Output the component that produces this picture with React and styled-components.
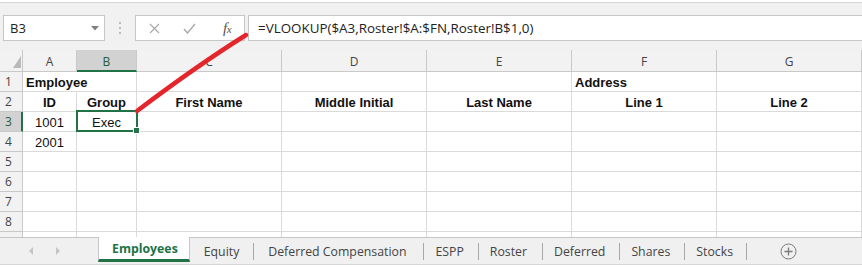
import React from 'react';
import styled, { createGlobalStyle } from 'styled-components';

const GREEN = '#217346';
const GRID = '#dadada';
const HEAD_LINE = '#c9c9c9';

const Global = createGlobalStyle`
  html, body { margin: 0; padding: 0; background: #fff; }
  * { box-sizing: border-box; }
`;

const Page = styled.div`
  position: relative;
  width: 862px;
  height: 267px;
  overflow: hidden;
  background: #fff;
  padding-top: 2px;
  display: flex;
  flex-direction: column;
`;

/* ---------- formula bar ---------- */
const FormulaBar = styled.div`
  height: 48px;
  border-top: 1px solid #d4d4d4;
  background: #f1f1f1;
  display: flex;
  align-items: flex-start;
  padding: 12px 0 0 3px;
`;

const Box = styled.div`
  height: 26px;
  background: #fff;
  border: 1px solid #c6c6c6;
  display: flex;
  align-items: center;
`;

const NameBox = styled(Box)`
  width: 102px;
  padding: 0 5px 0 6px;
  justify-content: space-between;
  font: 13px "Open Sans", "Noto Sans", sans-serif;
  color: #222;
`;

const Grip = styled.div`
  width: 30px;
  height: 26px;
  display: flex;
  flex-direction: column;
  align-items: center;
  justify-content: center;
  gap: 3px;
  & > i { width: 2px; height: 2px; background: #bdbdbd; display: block; }
`;

const FxBox = styled(Box)`
  width: 110px;
  padding: 0 0 0 12px;
`;

const IconSlot = styled.div`
  width: ${p => p.$w}px;
  display: flex;
  align-items: center;
  justify-content: center;
`;

const FxText = styled.span`
  font: italic 15px "Liberation Serif", "DejaVu Serif", serif;
  color: #555;
  letter-spacing: -0.5px;
  & > small { font-size: 11px; }
`;

const FormulaInput = styled(Box)`
  flex: 1;
  margin-left: 3px;
  border-right: none;
  padding-left: 9px;
  font: 13.4px "Open Sans", "Noto Sans", sans-serif;
  color: #222;
`;

/* ---------- sheet ---------- */
const Sheet = styled.div`
  height: 187px;
  overflow: hidden;
  display: grid;
  grid-template-columns: 23px 54px 60px repeat(5, 145px);
  grid-template-rows: 22px;
  grid-auto-rows: 20px;
`;

const Corner = styled.div`
  background: #f2f2f2;
  border-right: 1px solid ${HEAD_LINE};
  border-bottom: 1px solid ${HEAD_LINE};
  display: flex;
  align-items: flex-end;
  justify-content: flex-end;
  padding: 0 1px 3px 0;
`;

const ColHead = styled.div`
  background: ${p => (p.$active ? '#d2d2d2' : '#f2f2f2')};
  border-right: 1px solid ${HEAD_LINE};
  border-bottom: ${p => (p.$active ? `2px solid ${GREEN}` : `1px solid ${HEAD_LINE}`)};
  display: flex;
  align-items: center;
  justify-content: center;
  padding-top: ${p => (p.$active ? '3px' : '2px')};
  font: 12px "Open Sans", "Noto Sans", sans-serif;
  color: ${p => (p.$active ? '#255c3c' : '#444')};
`;

const RowHead = styled.div`
  background: ${p => (p.$active ? '#d2d2d2' : '#f2f2f2')};
  border-right: ${p => (p.$active ? `2px solid ${GREEN}` : `1px solid ${HEAD_LINE}`)};
  border-bottom: 1px solid ${HEAD_LINE};
  display: flex;
  align-items: center;
  padding-left: 5px;
  font: 12px "Open Sans", "Noto Sans", sans-serif;
  color: ${p => (p.$active ? '#255c3c' : '#444')};
`;

const Cell = styled.div`
  position: relative;
  border-right: 1px solid ${p => (p.$noRight ? 'transparent' : GRID)};
  border-bottom: 1px solid ${GRID};
  display: flex;
  align-items: center;
  justify-content: ${p => (p.$left ? 'flex-start' : 'center')};
  padding: 1px 3px 0;
  white-space: nowrap;
  font: ${p => (p.$bold ? 700 : 400)} 13px "Liberation Sans", Arial, sans-serif;
  color: #111;
  ${p =>
    p.$selected &&
    `
    &::after {
      content: '';
      position: absolute;
      left: -1px; top: -2px; right: -2px; bottom: -1px;
      border: 2px solid ${GREEN};
      pointer-events: none;
    }
    &::before {
      content: '';
      position: absolute;
      right: -4px; bottom: -3px;
      width: 5px; height: 5px;
      background: ${GREEN};
      border: 1px solid #fff;
      z-index: 2;
    }
  `}
`;

/* ---------- tabs ---------- */
const TabBar = styled.div`
  height: 28px;
  background: #f0f0f0;
  border-top: 1px solid #c6c6c6;
  border-bottom: 1px solid #d6d6d6;
  display: flex;
  align-items: stretch;
  font: 12.3px "Open Sans", "Noto Sans", sans-serif;
  color: #444;
`;

const NavArea = styled.div`
  width: 98px;
  display: flex;
  align-items: center;
  padding-left: 29px;
  gap: 21px;
`;

const ActiveTab = styled.div`
  margin-top: -1px;
  height: 25px;
  background: #fff;
  border-left: 1px solid #c6c6c6;
  border-right: 1px solid #c6c6c6;
  border-bottom: 3px solid ${GREEN};
  display: flex;
  align-items: center;
  padding: 1px 11px 0 13px;
  font-weight: 700;
  color: ${GREEN};
`;

const Tab = styled.div`
  display: flex;
  align-items: center;
  padding: 0 ${p => p.$pr ?? 14}px 0 ${p => p.$pl ?? 11}px;
  position: relative;
  &::after {
    content: '';
    position: absolute;
    right: 0;
    top: 5px;
    height: 17px;
    border-right: 1px solid #a8a8a8;
  }
`;

const AddSlot = styled.div`
  display: flex;
  align-items: center;
  padding-left: 33px;
`;

const Annotation = styled.svg`
  position: absolute;
  left: 0;
  top: 0;
  pointer-events: none;
`;

const cols = ['A', 'B', 'C', 'D', 'E', 'F', 'G'];

const rows = [
  { n: 1, cells: { A: { t: 'Employee', bold: true, left: true, noRight: true }, F: { t: 'Address', bold: true, left: true } } },
  {
    n: 2,
    cells: {
      A: { t: 'ID', bold: true },
      B: { t: 'Group', bold: true },
      C: { t: 'First Name', bold: true },
      D: { t: 'Middle Initial', bold: true },
      E: { t: 'Last Name', bold: true },
      F: { t: 'Line 1', bold: true },
      G: { t: 'Line 2', bold: true },
    },
  },
  { n: 3, active: true, cells: { A: { t: '1001' }, B: { t: 'Exec', selected: true } } },
  { n: 4, cells: { A: { t: '2001' } } },
  { n: 5, cells: {} },
  { n: 6, cells: {} },
  { n: 7, cells: {} },
  { n: 8, cells: {} },
  { n: null, cells: {} },
];

const tabs = [
  { t: 'Equity', pl: 14, pr: 15 },
  { t: 'Deferred Compensation', pl: 14, pr: 18 },
  { t: 'ESPP', pl: 11, pr: 15 },
  { t: 'Roster', pl: 11, pr: 16 },
  { t: 'Deferred', pl: 11, pr: 15 },
  { t: 'Shares', pl: 11, pr: 15 },
  { t: 'Stocks', pl: 11, pr: 14 },
];

const Arrow = ({ dir }) => (
  <svg width="5" height="8" viewBox="0 0 5 8">
    <path d={dir === 'left' ? 'M4 0 L0 4 L4 8 Z' : 'M1 0 L5 4 L1 8 Z'} fill="#c4c4c4" />
  </svg>
);

export default function App() {
  return (
    <>
      <Global />
      <Page>
        <FormulaBar>
          <NameBox>
            <span>B3</span>
            <svg width="8" height="5" viewBox="0 0 8 5">
              <path d="M0 0 L8 0 L4 4.5 Z" fill="#808080" />
            </svg>
          </NameBox>
          <Grip>
            <i />
            <i />
            <i />
          </Grip>
          <FxBox>
            <IconSlot $w={12}>
              <svg width="11" height="11" viewBox="0 0 11 11">
                <path d="M1 1 L10 10 M10 1 L1 10" stroke="#a9a9a9" strokeWidth="1.2" />
              </svg>
            </IconSlot>
            <IconSlot $w={58}>
              <svg width="13" height="11" viewBox="0 0 13 11">
                <path d="M1 6 L4.5 10 L12 1" stroke="#a9a9a9" strokeWidth="1.4" fill="none" />
              </svg>
            </IconSlot>
            <IconSlot $w={18}>
              <FxText>
                f<small>x</small>
              </FxText>
            </IconSlot>
          </FxBox>
          <FormulaInput>=VLOOKUP($A3,Roster!$A:$FN,Roster!B$1,0)</FormulaInput>
        </FormulaBar>

        <Sheet>
          <Corner>
            <svg width="8" height="12" viewBox="0 0 8 12">
              <path d="M8 0 L8 12 L0 12 Z" fill="#b9b9b9" />
            </svg>
          </Corner>
          {cols.map(c => (
            <ColHead key={c} $active={c === 'B'}>
              {c}
            </ColHead>
          ))}
          {rows.map((r, i) => (
            <React.Fragment key={i}>
              <RowHead $active={r.active}>{r.n}</RowHead>
              {cols.map(c => {
                const cell = r.cells[c] || {};
                return (
                  <Cell
                    key={c}
                    $bold={cell.bold}
                    $left={cell.left}
                    $noRight={cell.noRight}
                    $selected={cell.selected}
                  >
                    {cell.t}
                  </Cell>
                );
              })}
            </React.Fragment>
          ))}
        </Sheet>

        <TabBar>
          <NavArea>
            <Arrow dir="left" />
            <Arrow dir="right" />
          </NavArea>
          <ActiveTab>Employees</ActiveTab>
          {tabs.map(t => (
            <Tab key={t.t} $pl={t.pl} $pr={t.pr}>
              {t.t}
            </Tab>
          ))}
          <AddSlot>
            <svg width="17" height="17" viewBox="0 0 17 17">
              <circle cx="8.5" cy="8.5" r="7.5" fill="none" stroke="#7a7a7a" strokeWidth="1" />
              <path d="M8.5 4.5 V12.5 M4.5 8.5 H12.5" stroke="#7a7a7a" strokeWidth="1.3" />
            </svg>
          </AddSlot>
        </TabBar>

        <Annotation width="862" height="267" viewBox="0 0 862 267">
          <path
            d="M246 35 C 222 50, 178 80, 137 111"
            stroke="#e3262c"
            strokeWidth="4.5"
            strokeLinecap="round"
            fill="none"
          />
        </Annotation>
      </Page>
    </>
  );
}
